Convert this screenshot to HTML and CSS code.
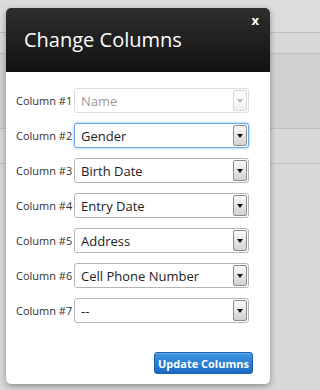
FILE: index.html
```html
<!DOCTYPE html>
<html>
<head>
<meta charset="utf-8">
<link rel="stylesheet" href="styles.css">
</head>
<body>
<div class="backdrop">
  <div class="bg-row r1"></div>
  <div class="bg-row r2"></div>
  <div class="bg-row r3"></div>
  <div class="bg-row r4"></div>
  <div class="bg-row r5"></div>
</div>
<div class="modal">
  <div class="modal-header">
    <h1 class="title">Change Columns</h1>
    <span class="close">x</span>
  </div>
  <div class="modal-body">
    <div class="row"><span class="label">Column #1</span><div class="select disabled"><span class="value">Name</span><span class="arrow"></span></div></div>
    <div class="row"><span class="label">Column #2</span><div class="select focused"><span class="value">Gender</span><span class="arrow"></span></div></div>
    <div class="row"><span class="label">Column #3</span><div class="select"><span class="value">Birth Date</span><span class="arrow"></span></div></div>
    <div class="row"><span class="label">Column #4</span><div class="select"><span class="value">Entry Date</span><span class="arrow"></span></div></div>
    <div class="row"><span class="label">Column #5</span><div class="select"><span class="value">Address</span><span class="arrow"></span></div></div>
    <div class="row"><span class="label">Column #6</span><div class="select"><span class="value">Cell Phone Number</span><span class="arrow"></span></div></div>
    <div class="row"><span class="label">Column #7</span><div class="select"><span class="value">--</span><span class="arrow"></span></div></div>
  </div>
  <div class="modal-footer">
    <button class="btn">Update Columns</button>
  </div>
</div>
</body>
</html>
```
FILE: styles.css
```css
html {
  background: #d3d3d3;
}
html, body {
  margin: 0;
  padding: 0;
}
body {
  height: 390px;
  overflow: hidden;
  background: #d3d3d3;
  font-family: "Open Sans", "DejaVu Sans", sans-serif;
  position: relative;
}
.backdrop {
  display: flex;
  flex-direction: column;
}
.bg-row {
  border-bottom: 1px solid #bdbdbd;
  background: #d8d8d8;
}
.r1 { height: 32px; background: #dcdcdc; }
.r2 { height: 20px; }
.r3 { height: 74px; background: #d0d0d0; }
.r4 { height: 34px; }
.r5 { height: 230px; border-bottom: none; }

.modal {
  position: absolute;
  left: 6px;
  top: 8px;
  width: 264px;
  background: #fff;
  border-radius: 5px;
  overflow: hidden;
  box-shadow: 0 2px 6px rgba(0,0,0,0.35);
}
.modal-header {
  position: relative;
  height: 64px;
  display: flex;
  align-items: center;
  padding-left: 18px;
  background: linear-gradient(#2e2e2e, #111);
}
.title {
  margin: 0;
  color: #fff;
  font-size: 20px;
  font-weight: normal;
  line-height: 1;
  padding-bottom: 1px;
}
.close {
  position: absolute;
  top: 3px;
  right: 11px;
  color: #fff;
  font-weight: bold;
  font-size: 13px;
}
.modal-body {
  padding: 16px 21px 0 10px;
  display: flex;
  flex-direction: column;
  gap: 10px;
}
.row {
  display: flex;
  align-items: center;
  gap: 4px;
}
.label {
  width: 54px;
  font-size: 11px;
  color: #333;
  white-space: nowrap;
}
.select {
  flex: 1;
  height: 25px;
  box-sizing: border-box;
  border: 1px solid #b5b5b5;
  border-radius: 3px;
  background: #fff;
  display: flex;
  align-items: center;
  padding: 1px;
}
.value {
  flex: 1;
  padding-left: 5px;
  font-size: 13px;
  color: #222;
}
.arrow {
  width: 14px;
  height: 21px;
  box-sizing: border-box;
  border: 1px solid #8c8c8c;
  border-radius: 2px;
  background: linear-gradient(#fbfbfb, #d2d2d2);
  display: flex;
  align-items: center;
  justify-content: center;
}
.arrow::after {
  content: "";
  border-left: 3.5px solid transparent;
  border-right: 3.5px solid transparent;
  border-top: 4px solid #111;
}
.select.disabled {
  border-color: #dcdcdc;
}
.select.disabled .value {
  color: #9a9a9a;
}
.select.disabled .arrow {
  border-color: #d6d6d6;
  background: linear-gradient(#fff, #f0f0f0);
}
.select.disabled .arrow::after {
  border-top-color: #b8b8b8;
}
.select.focused {
  border-color: #69a8e8;
  box-shadow: 0 0 3px rgba(82,155,236,0.7);
}
.modal-footer {
  display: flex;
  justify-content: flex-end;
  padding: 29px 17px 10px 0;
}
.btn {
  width: 99px;
  height: 22px;
  margin: 0;
  padding: 0;
  border: 1px solid #1b60b0;
  border-radius: 3px;
  background: linear-gradient(#4196e0, #1b6bc6);
  color: #fff;
  font-family: "Open Sans", "DejaVu Sans", sans-serif;
  font-weight: bold;
  font-size: 11px;
  box-shadow: inset 0 1px 0 rgba(255,255,255,0.2);
}
```
